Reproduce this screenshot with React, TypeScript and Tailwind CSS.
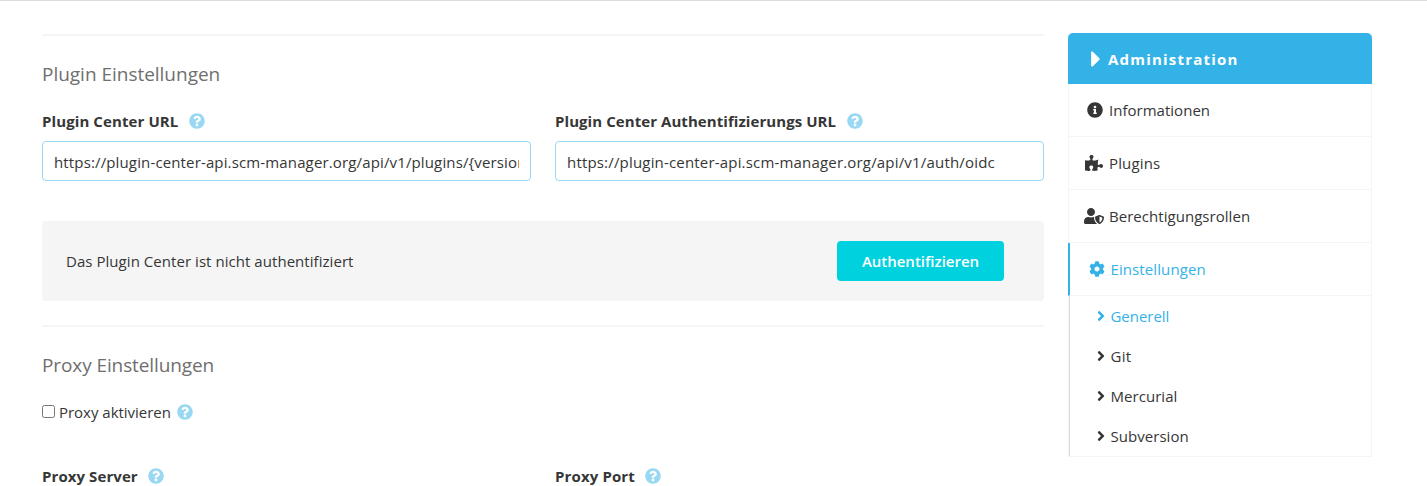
import React from "react";
import {
  FaAngleRight,
  FaCaretRight,
  FaCog,
  FaInfoCircle,
  FaPuzzlePiece,
  FaQuestionCircle,
  FaUserShield,
} from "react-icons/fa";

function Help({ className }: { className: string }) {
  return <FaQuestionCircle className={`size-4 shrink-0 text-[#98d8f3] ${className}`} />;
}

function Heading({ text, tracking }: { text: string; tracking: string }) {
  return <h3 className={`text-[19px] leading-6 text-[#6f6f6f] ${tracking}`}>{text}</h3>;
}

function Label({ text, tracking, gap = "ml-[10px]" }: { text: string; tracking: string; gap?: string }) {
  return (
    <div className="flex h-6 items-center">
      <span className={`font-bold text-[#363636] ${tracking}`}>{text}</span>
      <Help className={gap} />
    </div>
  );
}

function TextInput({ value, tracking }: { value: string; tracking: string }) {
  return (
    <input
      readOnly
      value={value}
      className={`mt-2 h-10 w-full rounded-[4px] border border-[#98d8f3] bg-white px-[11px] pb-0 pt-[2px] text-[#363636] outline-none ${tracking}`}
    />
  );
}

function NavItem({ icon, text, tracking }: { icon: React.ReactNode; text: string; tracking: string }) {
  return (
    <a className="flex h-[53px] items-center border-x border-b border-[#f5f5f5] pl-[15px] text-[#363636]">
      <span className="flex w-[21px]">{icon}</span>
      <span className={`ml-[4px] ${tracking}`}>{text}</span>
    </a>
  );
}

function SubItem({ text, tracking, active }: { text: string; tracking: string; active?: boolean }) {
  return (
    <a className={`flex h-10 items-center pl-[23px] ${active ? "text-[#33b2e8]" : "text-[#363636]"}`}>
      <FaAngleRight className="size-4" />
      <span className={`ml-[1.5px] ${tracking}`}>{text}</span>
    </a>
  );
}

export default function App() {
  return (
    <div className="flex h-[486px] items-start overflow-hidden border-t border-[#dbdbdb] bg-white pl-[42px] font-['Open_Sans','Noto_Sans',sans-serif] text-[15px] leading-6 text-[#363636]">
      <main className="w-[1002px] pt-[33px]">
        <div className="h-[2px] bg-[#f5f5f5]" />
        <div className="mt-[26px]">
          <Heading text="Plugin Einstellungen" tracking="tracking-[-0.02px]" />
        </div>
        <div className="mt-[23px] grid grid-cols-2 gap-6">
          <div>
            <Label text="Plugin Center URL" tracking="tracking-[0.1px]" gap="ml-[11px]" />
            <TextInput
              value="https://plugin-center-api.scm-manager.org/api/v1/plugins/{version}?os={os}&arch={arch}"
              tracking="tracking-[0.14px]"
            />
          </div>
          <div>
            <Label text="Plugin Center Authentifizierungs URL" tracking="tracking-[0.07px]" gap="ml-[11px]" />
            <TextInput value="https://plugin-center-api.scm-manager.org/api/v1/auth/oidc" tracking="tracking-[0.18px]" />
          </div>
        </div>
        <div className="mt-10 flex h-20 items-center justify-between rounded-[4px] bg-[#f5f5f5] pl-6 pr-10">
          <span className="tracking-[0.05px]">Das Plugin Center ist nicht authentifiziert</span>
          <button className="h-10 w-[167px] rounded-[4px] bg-[#00d1df] font-semibold tracking-[-0.02px] text-white">
            Authentifizieren
          </button>
        </div>
        <div className="mt-6 h-[2px] bg-[#f5f5f5]" />
        <div className="mt-[26px]">
          <Heading text="Proxy Einstellungen" tracking="tracking-[-0.1px]" />
        </div>
        <div className="mt-[23px] flex h-6 items-center">
          <span className="mb-px size-[13px] rounded-[2.5px] border border-[#767676] bg-white" />
          <span className="ml-1 tracking-[-0.02px]">Proxy aktivieren</span>
          <Help className="ml-[6px]" />
        </div>
        <div className="mt-10 grid grid-cols-2 gap-6">
          <Label text="Proxy Server" tracking="tracking-[0.08px]" />
          <Label text="Proxy Port" tracking="tracking-[0.13px]" />
        </div>
      </main>
      <aside className="ml-6 mt-8 w-[304px]">
        <div className="flex h-[51px] items-center rounded-t-[5px] bg-[#33b2e8] pl-[19px] text-white">
          <FaCaretRight className="h-[26px] w-[18px]" />
          <span className="ml-[3px] pt-px font-bold tracking-[1.2px]">Administration</span>
        </div>
        <NavItem icon={<FaInfoCircle className="ml-[2.5px] size-4" />} text="Informationen" tracking="tracking-[0.02px]" />
        <NavItem icon={<FaPuzzlePiece className="ml-px h-4 w-[18px]" />} text="Plugins" tracking="tracking-[0.15px]" />
        <NavItem icon={<FaUserShield className="h-4 w-5" />} text="Berechtigungsrollen" tracking="tracking-[0.04px]" />
        <a className="flex h-[53px] items-center border-b border-r border-l-2 border-b-[#f5f5f5] border-l-[#33b2e8] border-r-[#f5f5f5] pl-[18.5px] text-[#33b2e8]">
          <FaCog className="size-4" />
          <span className="ml-[6px] tracking-[0.1px]">Einstellungen</span>
        </a>
        <div className="border-x border-b border-[#f5f5f5]">
          <div className="border-l border-[#dbdbdb]">
            <SubItem text="Generell" tracking="tracking-[-0.04px]" active />
            <SubItem text="Git" tracking="tracking-[0.3px]" />
            <SubItem text="Mercurial" tracking="tracking-[0.05px]" />
            <SubItem text="Subversion" tracking="tracking-[0.04px]" />
          </div>
        </div>
      </aside>
    </div>
  );
}
